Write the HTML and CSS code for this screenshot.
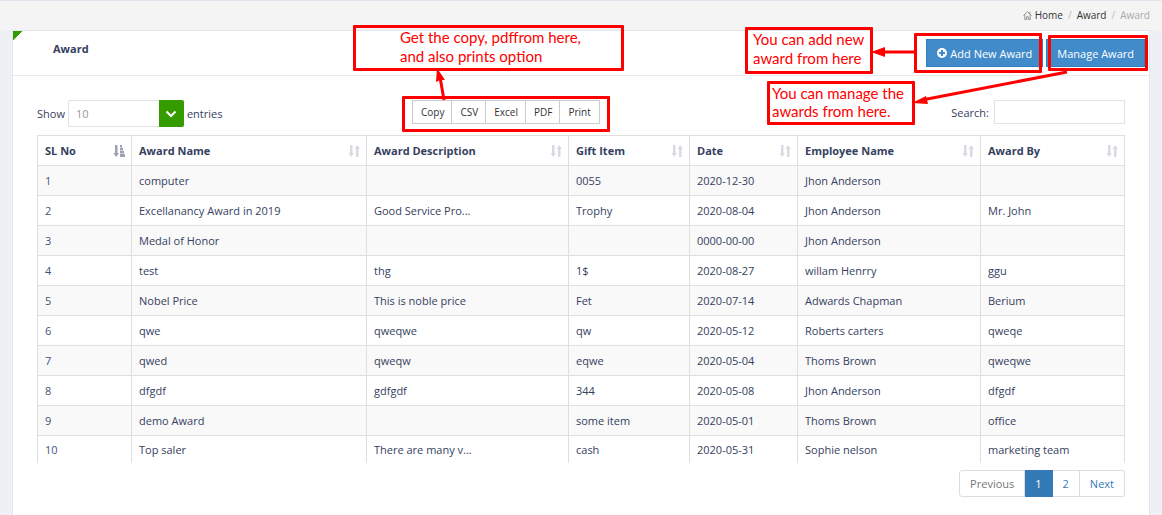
FILE: index.html
```html
<!DOCTYPE html>
<html lang="en">
<head>
<meta charset="utf-8">
<title>Award</title>
<link rel="stylesheet" href="styles.css">
</head>
<body>
<svg class="sprite" aria-hidden="true">
  <symbol id="sort" viewBox="0 0 12 12"><path d="M2 0h2.500v8H6L3.200 12 .5 8H2zM8 12h2.500V4H12L9.200 0 6.500 4H8z"/></symbol>
  <symbol id="sort-asc" viewBox="0 0 12 12"><path d="M2 0h2.500v8H6L3.200 12 .5 8H2zM7 0h2v2.500H7zM7 3h3v2.500H7zM7 6h4v2.500H7zM7 9h5v3H7z"/></symbol>
</svg>
<nav class="breadcrumb" aria-label="Breadcrumb">
  <svg class="home-icon" viewBox="0 0 10 10" aria-hidden="true"><path d="M.5 5 5 .8 9.500 5M2 4v5.500h2V6.500h2v3h2V4M7.500 1v2"/></svg>
  <a href="#">Home</a><span class="sep">/</span><a href="#">Award</a><span class="sep">/</span><span class="current">Award</span>
</nav>
<main class="panel">
  <header class="panel-head">
    <h1>Award</h1>
    <div class="actions">
      <button class="action" type="button"><svg viewBox="0 0 10 10" aria-hidden="true"><circle cx="5" cy="5" r="5" fill="#fff"/><path d="M5 2v6M2 5h6" stroke="#428bca" stroke-width="2"/></svg>Add New Award</button>
      <button class="action" type="button">Manage Award</button>
    </div>
  </header>
  <section class="panel-body">
    <div class="toolbar">
      <div class="length">
        <label for="length">Show</label>
        <span class="select"><select id="length"><option>10</option><option>25</option></select><span class="chevron"><svg viewBox="0 0 12 8" aria-hidden="true"><path d="M1.500 1.500 6 6l4.500-4.500"/></svg></span></span>
        <span>entries</span>
      </div>
      <div class="exports">
        <button type="button">Copy</button><button type="button">CSV</button><button type="button">Excel</button><button type="button">PDF</button><button type="button">Print</button>
      </div>
      <div class="search"><label for="search">Search:</label><input id="search" type="search"></div>
    </div>
    <table>
      <colgroup><col class="c-no"><col class="c-name"><col class="c-desc"><col class="c-gift"><col class="c-date"><col class="c-emp"><col class="c-by"></colgroup>
      <thead><tr>
        <th class="sorted"><div>SL No<svg><use href="#sort-asc"/></svg></div></th>
        <th><div>Award Name<svg><use href="#sort"/></svg></div></th>
        <th><div>Award Description<svg><use href="#sort"/></svg></div></th>
        <th><div>Gift Item<svg><use href="#sort"/></svg></div></th>
        <th><div>Date<svg><use href="#sort"/></svg></div></th>
        <th><div>Employee Name<svg><use href="#sort"/></svg></div></th>
        <th><div>Award By<svg><use href="#sort"/></svg></div></th>
      </tr></thead>
      <tbody>
        <tr><td>1</td><td>computer</td><td></td><td>0055</td><td>2020-12-30</td><td>Jhon Anderson</td><td></td></tr>
        <tr><td>2</td><td>Excellanancy Award in 2019</td><td>Good Service Pro...</td><td>Trophy</td><td>2020-08-04</td><td>Jhon Anderson</td><td>Mr. John</td></tr>
        <tr><td>3</td><td>Medal of Honor</td><td></td><td></td><td>0000-00-00</td><td>Jhon Anderson</td><td></td></tr>
        <tr><td>4</td><td>test</td><td>thg</td><td>1$</td><td>2020-08-27</td><td>willam Henrry</td><td>ggu</td></tr>
        <tr><td>5</td><td>Nobel Price</td><td>This is noble price</td><td>Fet</td><td>2020-07-14</td><td>Adwards Chapman</td><td>Berium</td></tr>
        <tr><td>6</td><td>qwe</td><td>qweqwe</td><td>qw</td><td>2020-05-12</td><td>Roberts carters</td><td>qweqe</td></tr>
        <tr><td>7</td><td>qwed</td><td>qweqw</td><td>eqwe</td><td>2020-05-04</td><td>Thoms Brown</td><td>qweqwe</td></tr>
        <tr><td>8</td><td>dfgdf</td><td>gdfgdf</td><td>344</td><td>2020-05-08</td><td>Jhon Anderson</td><td>dfgdf</td></tr>
        <tr><td>9</td><td>demo Award</td><td></td><td>some item</td><td>2020-05-01</td><td>Thoms Brown</td><td>office</td></tr>
        <tr><td>10</td><td>Top saler</td><td>There are many v...</td><td>cash</td><td>2020-05-31</td><td>Sophie nelson</td><td>marketing team</td></tr>
      </tbody>
    </table>
    <nav class="pages" aria-label="Pages">
      <a class="muted" href="#">Previous</a><a class="active" href="#" aria-current="page">1</a><a href="#">2</a><a href="#">Next</a>
    </nav>
  </section>
</main>
<div class="notes">
  <div class="note note-export">Get the copy, pdffrom here,<br>and also prints option</div>
  <div class="note frame-export"></div>
  <svg class="arrow-export" viewBox="0 0 20 34"><path class="shaft" d="M12 33 8 10"/><path d="M5 1 4 15 8 13 13 13z"/></svg>
  <div class="right-notes">
    <svg class="arrows" viewBox="0 0 300 70"><path class="shaft" d="M23 12H54M60 60 205 32"/><path d="M9 12 23 7V17zM50 63 64 56 66 64z"/></svg>
    <div class="note note-add">You can add new<br>award from here</div>
    <div class="note note-manage">You can manage the<br>awards from here.</div>
    <div class="note frame-add"></div>
    <div class="note frame-manage"></div>
  </div>
</div>
</body>
</html>
```
FILE: styles.css
```css
* { box-sizing: border-box; }
body {
  margin: 0;
  min-height: 100vh;
  display: flex;
  flex-direction: column;
  position: relative;
  overflow: hidden;
  background: #eff0f5;
  color: #354160;
  font: 11px/17px "Open Sans", "Noto Sans", sans-serif;
}
button, input, select { font: inherit; color: inherit; }
a { color: inherit; text-decoration: none; }
.sprite { position: absolute; width: 0; height: 0; }

.breadcrumb {
  display: flex;
  align-items: center;
  justify-content: flex-end;
  height: 30px;
  padding: 0 12px;
  border-top: 1px solid #e1e5ed;
  background: #f4f4f4;
  color: #333;
  font-size: 10px;
}
.home-icon {
  width: 9px;
  height: 9px;
  margin-right: 3px;
  fill: none;
  stroke: #888;
}
.sep { padding: 0 5px; color: #bbb; }
.current { color: #aaa; }

.panel {
  flex: 1;
  margin: 0 12px;
  border: 1px solid #e2e6ef;
  border-bottom: 0;
  background: #fff;
}
.panel-head {
  display: flex;
  align-items: center;
  justify-content: space-between;
  height: 45px;
  padding: 0 4px 0 40px;
  border-bottom: 1px solid #e9eaec;
  background: linear-gradient(135deg, #359c00 7px, transparent 7px);
}
h1 { margin: 0 0 9px; font-size: 11px; line-height: 17px; }
.actions { display: flex; gap: 3px; }
.action {
  display: flex;
  align-items: center;
  gap: 3px;
  height: 28px;
  padding: 0 10px;
  border: 1px solid #357ebd;
  background: #428bca;
  color: #fff;
}
.action svg { width: 10px; height: 10px; }

.panel-body { padding: 24px; }
.toolbar {
  display: grid;
  grid-template-columns: 375px 1fr auto;
  align-items: start;
  min-height: 35px;
}
.length { display: flex; align-items: center; gap: 3px; }
.select { position: relative; width: 116px; height: 27px; }
.select select {
  appearance: none;
  width: 100%;
  height: 100%;
  padding: 0 7px;
  border: 1px solid #e1e1e1;
  border-radius: 2px;
  background: #fff;
  color: #999;
}
.chevron {
  position: absolute;
  inset: 0 0 0 auto;
  display: grid;
  place-items: center;
  width: 25px;
  border-radius: 0 2px 2px 0;
  background: #359c00;
  pointer-events: none;
}
.chevron svg { width: 12px; height: 8px; fill: none; stroke: #fff; stroke-width: 2; }
.exports { display: flex; }
.exports button {
  height: 24px;
  padding: 0 8px;
  border: 1px solid #ccc;
  background: #fff;
  color: #333;
  font-size: 10px;
}
.exports button + button { margin-left: -2px; }
.search { display: flex; align-items: center; gap: 5px; }
.search input {
  width: 131px;
  height: 24px;
  border: 1px solid #e1e1e1;
  background: #fff;
}

table {
  width: 100%;
  table-layout: fixed;
  border-collapse: collapse;
}
.c-no { width: 94px; }
.c-name { width: 235px; }
.c-desc { width: 202px; }
.c-gift { width: 121px; }
.c-date { width: 108px; }
.c-emp { width: 183px; }
.c-by { width: 144px; }
th, td {
  height: 30px;
  padding: 6px 7px;
  border: 1px solid #dfdfdf;
  text-align: left;
}
th { padding-right: 6px; }
th div { display: flex; align-items: center; justify-content: space-between; }
th svg { width: 12px; height: 12px; fill: #d8dbe3; }
th.sorted svg { fill: #9ba1b2; }
tbody tr:nth-child(odd) { background: #f9f9f9; }
tbody tr:last-child td { height: 27px; padding: 5px 7px 4px; border-bottom: 0; }
td:first-child { color: #3f5478; }

.pages { display: flex; justify-content: flex-end; margin-top: 7px; }
.pages a {
  padding: 4px 10px;
  border: 1px solid #ddd;
  color: #337ab7;
}
.pages a + a { border-left: 0; }
.pages a:first-child { border-radius: 3px 0 0 3px; }
.pages a:last-child { border-radius: 0 3px 3px 0; }
.pages .muted { color: #777; }
.pages .active { border-color: #337ab7; background: #337ab7; color: #fff; }

/* Help callouts lie over the page */
.notes { position: absolute; inset: 0; pointer-events: none; }
.note {
  position: absolute;
  border: 3px solid #f00;
  border-radius: 1px;
  color: #f00;
  font: 15px/19px Lato, "Open Sans", sans-serif;
  white-space: nowrap;
}
.note-export { left: 353px; top: 25px; width: 271px; height: 46px; padding-left: 44px; }
.frame-export { left: 402px; top: 96px; width: 208px; height: 36px; }
.right-notes { position: absolute; top: 0; right: 0; width: 300px; }
.note-add { right: 289px; top: 27px; width: 128px; height: 47px; padding-left: 5px; }
.note-manage { right: 247px; top: 81px; width: 148px; height: 44px; padding-left: 2px; line-height: 18px; }
.frame-add { right: 120px; top: 33px; width: 128px; height: 40px; }
.frame-manage { right: 14px; top: 35px; width: 100px; height: 36px; }
.arrow-export, .arrows { position: absolute; fill: #f00; }
.arrow-export { left: 432px; top: 67px; width: 20px; height: 34px; }
.arrows { left: 0; top: 40px; width: 300px; height: 70px; }
.shaft { fill: none; stroke: #f00; stroke-width: 3; }
```
